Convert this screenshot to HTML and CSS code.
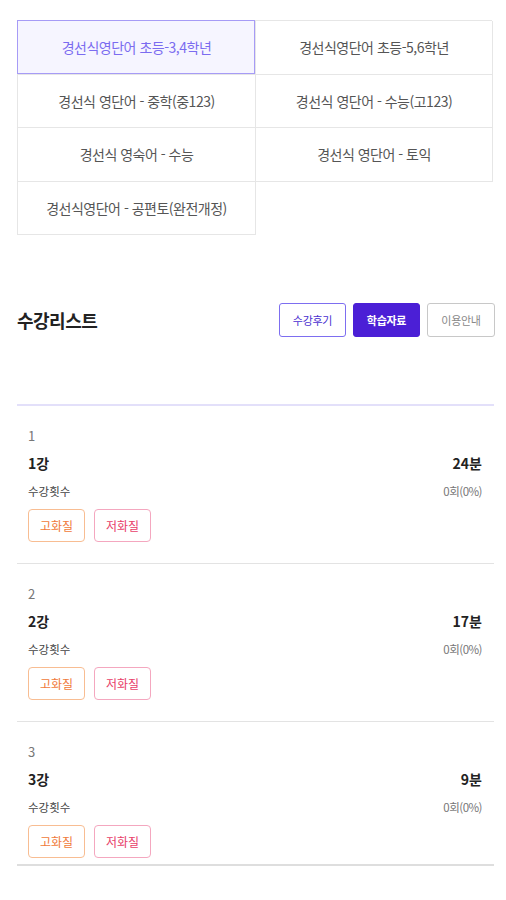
FILE: index.html
```html
<!DOCTYPE html>
<html lang="ko">
<head>
	<meta charset="utf-8">
	<title>수강리스트</title>
	<link rel="stylesheet" href="styles.css">
</head>
<body>
	<div class="books">
		<a class="book on">경선식영단어 초등-3,4학년</a>
		<a class="book">경선식영단어 초등-5,6학년</a>
		<a class="book">경선식 영단어 - 중학(중123)</a>
		<a class="book">경선식 영단어 - 수능(고123)</a>
		<a class="book">경선식 영숙어 - 수능</a>
		<a class="book">경선식 영단어 - 토익</a>
		<a class="book">경선식영단어 - 공편토(완전개정)</a>
	</div>

	<div class="list-head">
		<h2>수강리스트</h2>
		<div class="tabs">
			<button class="tab review">수강후기</button>
			<button class="tab data">학습자료</button>
			<button class="tab guide">이용안내</button>
		</div>
	</div>

	<ul class="lectures">
		<li class="lecture">
			<div class="num">1</div>
			<div class="row title"><span>1강</span><span>24분</span></div>
			<div class="row count"><span>수강횟수</span><span class="pct">0회(0%)</span></div>
			<div class="play">
				<button class="hq">고화질</button>
				<button class="lq">저화질</button>
			</div>
		</li>
		<li class="lecture">
			<div class="num">2</div>
			<div class="row title"><span>2강</span><span>17분</span></div>
			<div class="row count"><span>수강횟수</span><span class="pct">0회(0%)</span></div>
			<div class="play">
				<button class="hq">고화질</button>
				<button class="lq">저화질</button>
			</div>
		</li>
		<li class="lecture">
			<div class="num">3</div>
			<div class="row title"><span>3강</span><span>9분</span></div>
			<div class="row count"><span>수강횟수</span><span class="pct">0회(0%)</span></div>
			<div class="play">
				<button class="hq">고화질</button>
				<button class="lq">저화질</button>
			</div>
		</li>
	</ul>
</body>
</html>
```

FILE: styles.css
```css
body {
	margin: 0;
	padding: 20px 12px 0 17px;
	background: #fff;
	color: #333;
	font-family: "Noto Sans CJK KR", "Noto Sans", sans-serif;
}
.books {
	display: grid;
	grid-template-columns: 238px 237px;
	width: 475px;
	border-top: 1px solid #e6e6e6;
	border-left: 1px solid #e6e6e6;
	box-sizing: border-box;
}
.book {
	display: flex;
	align-items: center;
	justify-content: center;
	height: 52.5px;
	border-right: 1px solid #e6e6e6;
	border-bottom: 1px solid #e6e6e6;
	font-size: 14px;
	color: #555;
	letter-spacing: -0.5px;
}
.book.on {
	background: #f6f5ff;
	color: #7b6cf0;
	box-shadow: inset 0 0 0 1px #a69bf6;
	margin: -1px 0 0 -1px;
	height: 53.5px;
	padding-left: 1px;
}
.list-head {
	display: flex;
	align-items: center;
	justify-content: space-between;
	margin-top: 68px;
	width: 478px;
}
h2 {
	margin: 0;
	font-size: 18px;
	font-weight: bold;
	color: #222;
	letter-spacing: -0.5px;
}
.tabs {
	display: flex;
	gap: 7px;
}
.tab {
	width: 67px;
	height: 34px;
	border-radius: 3px;
	font-family: inherit;
	font-size: 11px;
	letter-spacing: -0.3px;
	background: #fff;
	padding: 0;
}
.tab.review {
	border: 1px solid #7d6ef0;
	color: #4a2fd0;
}
.tab.data {
	border: 1px solid #4b1fd6;
	background: #4b1fd6;
	color: #fff;
	font-weight: bold;
}
.tab.guide {
	width: 68px;
	border: 1px solid #c8c8c8;
	color: #888;
}
.lectures {
	list-style: none;
	margin: 67px 0 0;
	padding: 0;
	width: 477px;
	border-top: 2px solid #e3e0fa;
}
.lecture {
	padding: 20px 12px 21px 11px;
	border-bottom: 1px solid #e3e3e3;
}
.lecture:last-child {
	padding-bottom: 6px;
	border-bottom: 2px solid #dedede;
}
.num {
	height: 20px;
	line-height: 20px;
	font-size: 13px;
	color: #777;
}
.row {
	display: flex;
	justify-content: space-between;
}
.title {
	margin-top: 7px;
	height: 20px;
	line-height: 20px;
	font-size: 14px;
	font-weight: bold;
	color: #222;
}
.count {
	margin-top: 10px;
	height: 16px;
	line-height: 16px;
	font-size: 11.5px;
	color: #444;
}
.count .pct {
	color: #777;
	letter-spacing: -0.5px;
}
.play {
	display: flex;
	gap: 9px;
	margin-top: 10px;
}
.play button {
	width: 57px;
	height: 33px;
	border-radius: 4px;
	background: #fff;
	font-family: inherit;
	font-size: 12px;
	padding: 0;
}
.hq {
	border: 1px solid #f8bd92;
	color: #f07a3a;
}
.lq {
	border: 1px solid #f4a7bf;
	color: #e8406a;
}
```
